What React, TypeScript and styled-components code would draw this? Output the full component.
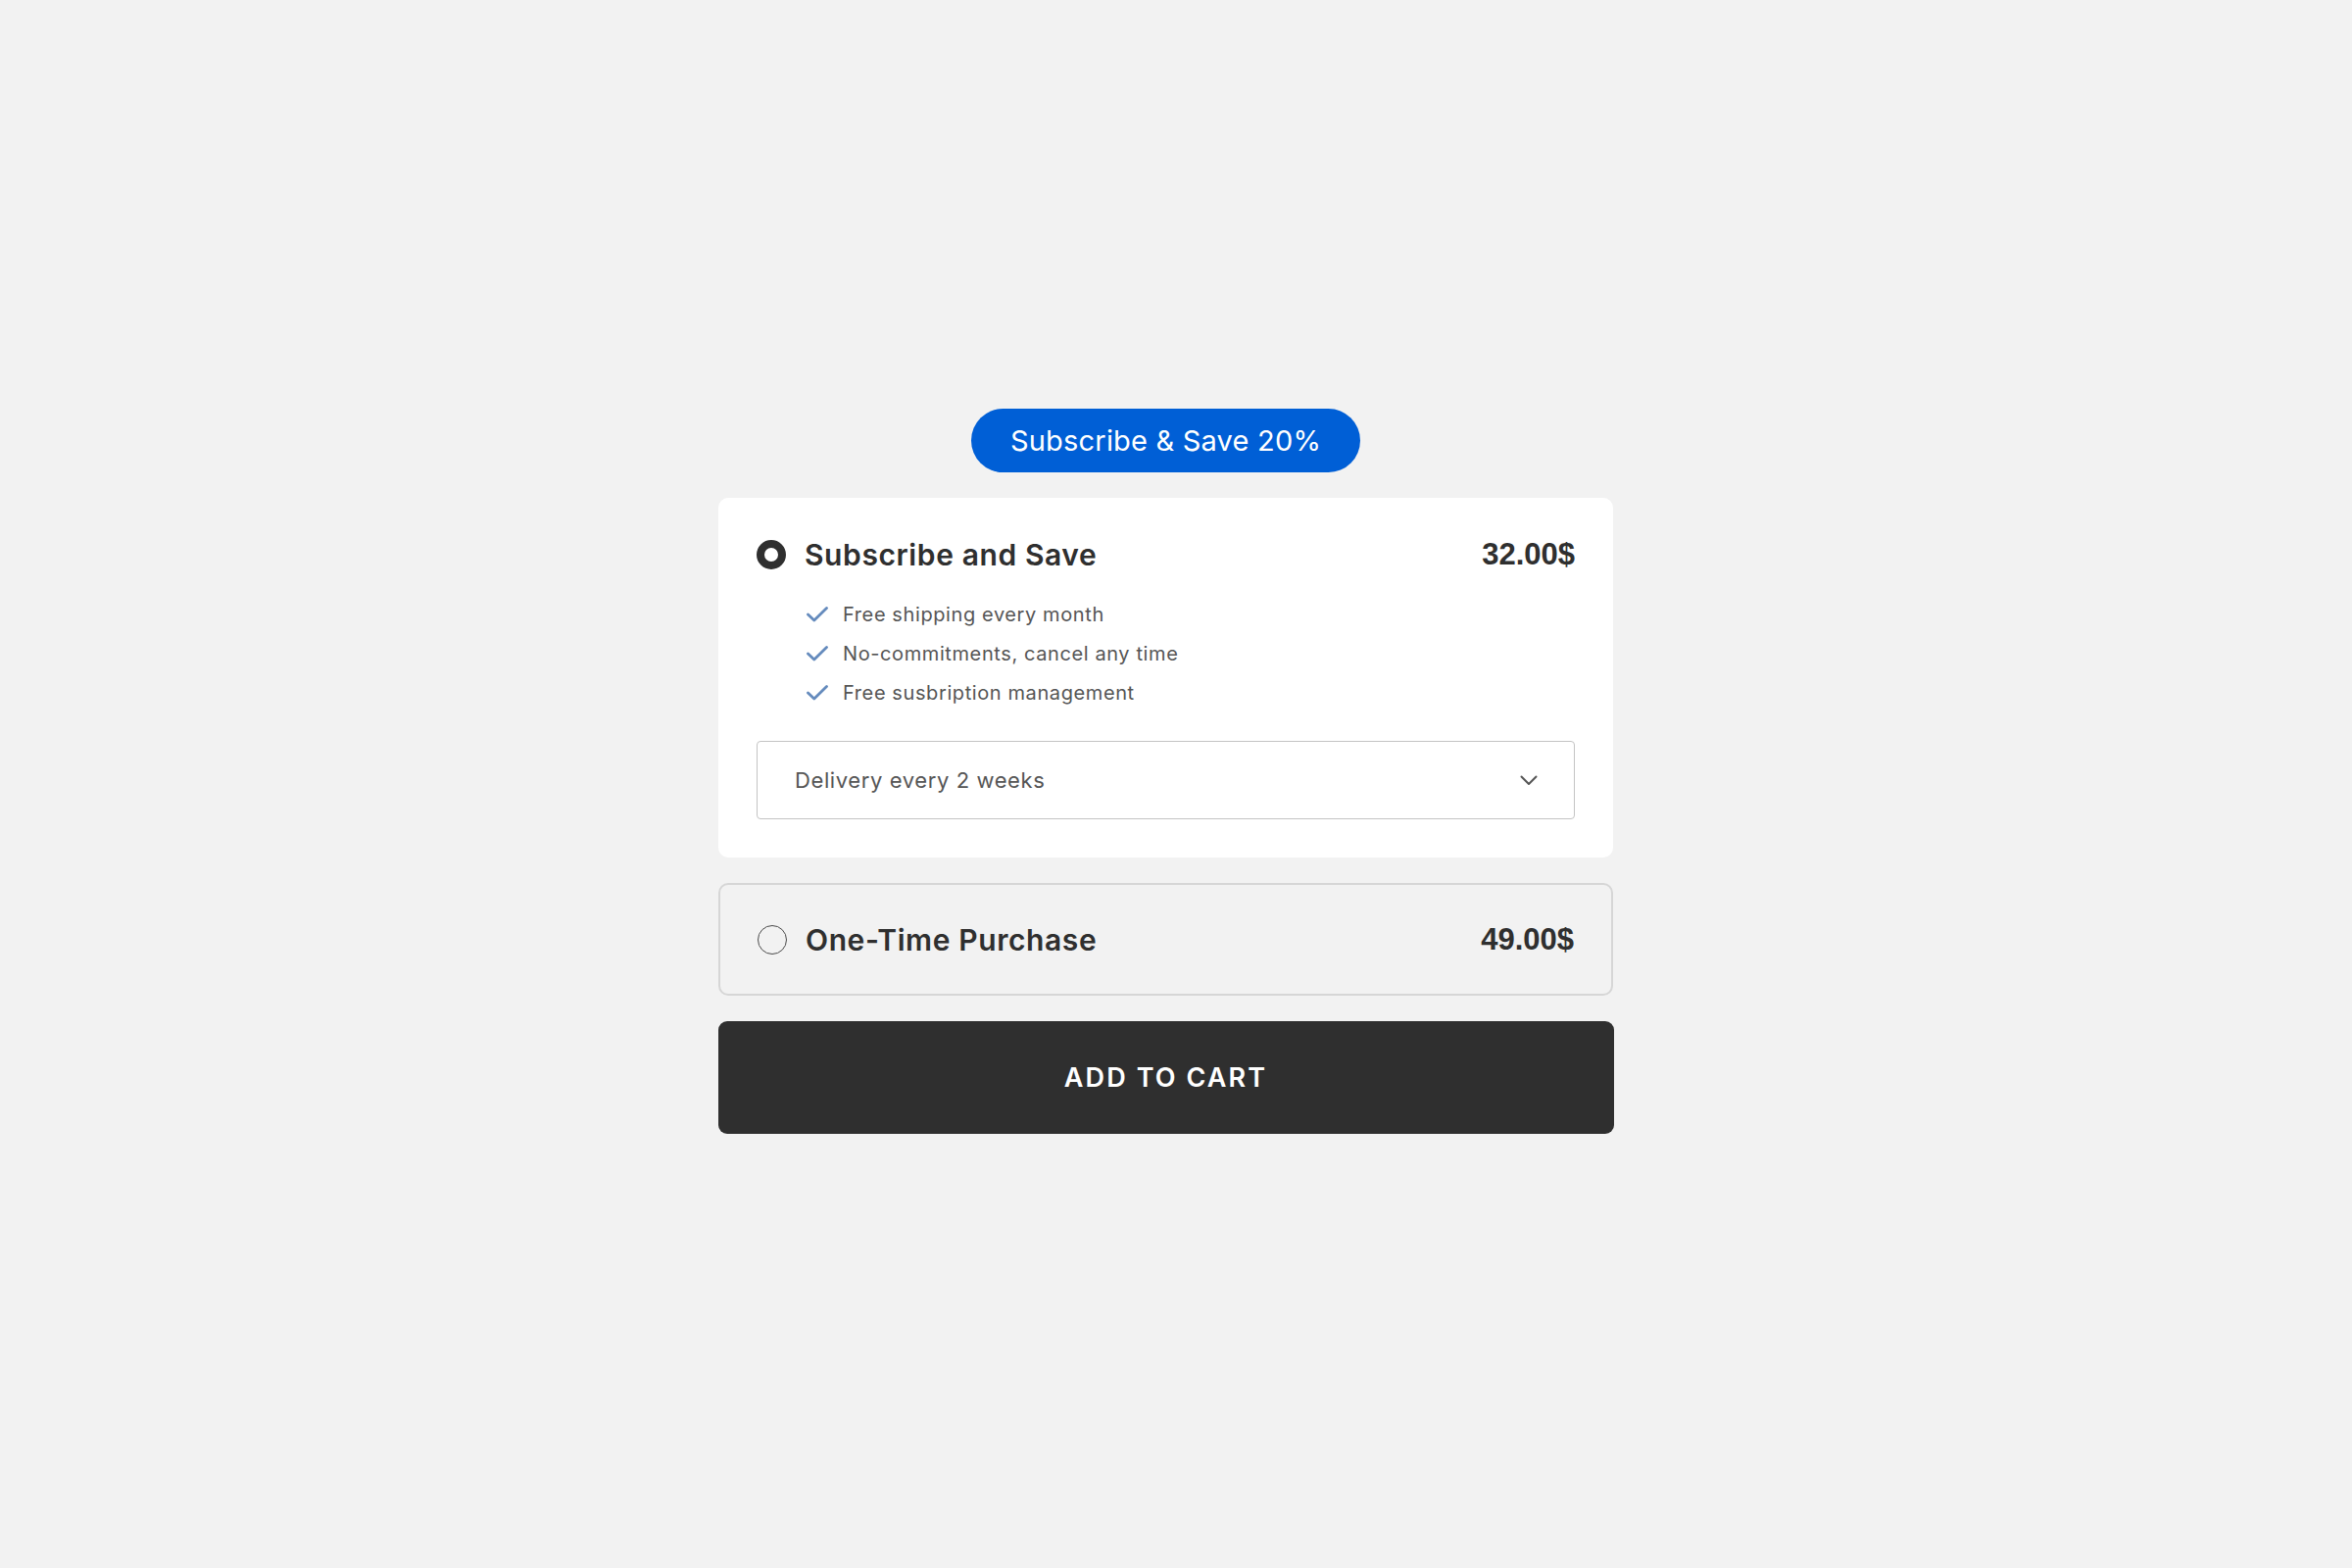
import React from "react";
import styled, { createGlobalStyle } from "styled-components";

const Global = createGlobalStyle`
  html, body { margin: 0; padding: 0; background: #f2f2f2; }
  body { font-family: Inter, "Open Sans", sans-serif; color: #2f2f2f; }
`;

const Page = styled.div`
  min-height: 1600px;
  display: flex;
  justify-content: center;
  padding: 417px 21px 0 0;
  box-sizing: border-box;
`;

const Column = styled.div`
  width: 913px;
  display: flex;
  flex-direction: column;
  align-items: center;
`;

const Badge = styled.div`
  height: 65px;
  width: 397px;
  border-radius: 33px;
  background: #005fd6;
  color: #fff;
  font-size: 29px;
  font-weight: 400;
  letter-spacing: 0.2px;
  display: flex;
  align-items: center;
  justify-content: center;
  margin-bottom: 26px;
`;

const Card = styled.div<{ $active?: boolean }>`
  width: 100%;
  box-sizing: border-box;
  border-radius: 10px;
  background: ${(p) => (p.$active ? "#ffffff" : "#f2f2f2")};
  border: ${(p) => (p.$active ? "none" : "2px solid #d6d6d6")};
  padding: ${(p) => (p.$active ? "39px" : "0 38px")};
  height: ${(p) => (p.$active ? "367px" : "115px")};
  display: flex;
  flex-direction: column;
  justify-content: ${(p) => (p.$active ? "flex-start" : "center")};
  margin-bottom: 26px;
`;

const Header = styled.div`
  height: 38px;
  display: flex;
  align-items: center;
`;

const Radio = styled.span<{ $checked?: boolean }>`
  width: 30px;
  height: 30px;
  box-sizing: border-box;
  border-radius: 50%;
  border: ${(p) => (p.$checked ? "8.5px solid #2f2f2f" : "1.5px solid #4a4a4a")};
  flex-shrink: 0;
  margin-right: 19px;
`;

const Title = styled.span`
  font-size: 30px;
  font-weight: 600;
  letter-spacing: 0.6px;
  color: #2f2f2f;
  flex: 1;
`;

const Price = styled.span`
  font-family: "Liberation Sans", Arial, sans-serif;
  font-size: 31px;
  font-weight: 700;
  color: #2f2f2f;
`;

const List = styled.ul`
  list-style: none;
  margin: 22px 0 29px 51px;
  padding: 0;
`;

const Item = styled.li`
  height: 40px;
  display: flex;
  align-items: center;
  font-size: 20px;
  letter-spacing: 0.6px;
  color: #555;
`;

const Check = styled.svg`
  width: 22px;
  height: 16px;
  margin-right: 15px;
  flex-shrink: 0;
`;

const Select = styled.div`
  height: 80px;
  box-sizing: border-box;
  border: 1px solid #c4c4c4;
  border-radius: 4px;
  display: flex;
  align-items: center;
  justify-content: space-between;
  padding: 0 37px 0 38px;
  font-size: 22px;
  letter-spacing: 0.6px;
  color: #555;
`;

const Button = styled.button`
  width: 914px;
  height: 115px;
  border: none;
  border-radius: 9px;
  background: #2f2f2f;
  color: #fff;
  font-family: Inter, sans-serif;
  font-size: 27px;
  font-weight: 600;
  letter-spacing: 2.1px;
  cursor: pointer;
`;

const CheckIcon = () => (
  <Check viewBox="0 0 22 16">
    <path d="M1.5 8 L7.8 14 L20.5 1.5" fill="none" stroke="#658bbd" strokeWidth="2.8" strokeLinecap="round" strokeLinejoin="round" />
  </Check>
);

const Chevron = () => (
  <svg width="18" height="11" viewBox="0 0 18 11">
    <path d="M1.5 1.5 L9 9 L16.5 1.5" fill="none" stroke="#555" strokeWidth="2" strokeLinecap="round" strokeLinejoin="round" />
  </svg>
);

export default function App() {
  return (
    <>
      <Global />
      <Page>
        <Column>
          <Badge>Subscribe &amp; Save 20%</Badge>
          <Card $active>
            <Header>
              <Radio $checked />
              <Title>Subscribe and Save</Title>
              <Price>32.00$</Price>
            </Header>
            <List>
              <Item><CheckIcon />Free shipping every month</Item>
              <Item><CheckIcon />No-commitments, cancel any time</Item>
              <Item><CheckIcon />Free susbription management</Item>
            </List>
            <Select>
              <span>Delivery every 2 weeks</span>
              <Chevron />
            </Select>
          </Card>
          <Card>
            <Header>
              <Radio />
              <Title>One-Time Purchase</Title>
              <Price>49.00$</Price>
            </Header>
          </Card>
          <Button>ADD TO CART</Button>
        </Column>
      </Page>
    </>
  );
}
